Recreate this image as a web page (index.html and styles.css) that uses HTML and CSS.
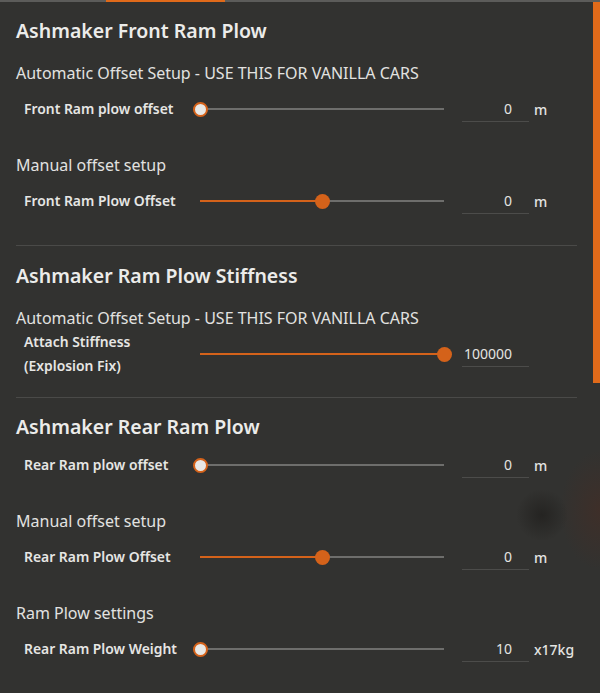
FILE: index.html
```html
<!DOCTYPE html>
<html lang="en">
<head>
    <meta charset="UTF-8">
    <title>Ram Plow settings</title>
    <link rel="stylesheet" href="styles.css">
</head>
<body>
    <div class="tabbar"><span class="tab-active"></span></div>
    <div class="scrollbar"></div>
    <div class="panel">
        <section class="section">
            <h2>Ashmaker Front Ram Plow</h2>
            <h3>Automatic Offset Setup - USE THIS FOR VANILLA CARS</h3>
            <div class="row">
                <span class="label">Front Ram plow offset</span>
                <div class="slider"><div class="fill" style="width: 0%"></div><span class="thumb empty" style="left: 0%"></span></div>
                <span class="value">0</span>
                <span class="unit">m</span>
            </div>
            <h3>Manual offset setup</h3>
            <div class="row">
                <span class="label">Front Ram Plow Offset</span>
                <div class="slider"><div class="fill" style="width: 50%"></div><span class="thumb" style="left: 50%"></span></div>
                <span class="value">0</span>
                <span class="unit">m</span>
            </div>
        </section>
        <section class="section compact">
            <h2>Ashmaker Ram Plow Stiffness</h2>
            <h3>Automatic Offset Setup - USE THIS FOR VANILLA CARS</h3>
            <div class="row tall">
                <span class="label">Attach Stiffness<br>(Explosion Fix)</span>
                <div class="slider"><div class="fill" style="width: 100%"></div><span class="thumb" style="left: 100%"></span></div>
                <span class="value left">100000</span>
                <span class="unit"></span>
            </div>
        </section>
        <section class="section last">
            <h2>Ashmaker Rear Ram Plow</h2>
            <div class="row first">
                <span class="label">Rear Ram plow offset</span>
                <div class="slider"><div class="fill" style="width: 0%"></div><span class="thumb empty" style="left: 0%"></span></div>
                <span class="value">0</span>
                <span class="unit">m</span>
            </div>
            <h3>Manual offset setup</h3>
            <div class="row">
                <span class="label">Rear Ram Plow Offset</span>
                <div class="slider"><div class="fill" style="width: 50%"></div><span class="thumb" style="left: 50%"></span></div>
                <span class="value">0</span>
                <span class="unit">m</span>
            </div>
            <h3>Ram Plow settings</h3>
            <div class="row">
                <span class="label">Rear Ram Plow Weight</span>
                <div class="slider"><div class="fill" style="width: 0%"></div><span class="thumb empty" style="left: 0%"></span></div>
                <span class="value">10</span>
                <span class="unit">x17kg</span>
            </div>
        </section>
    </div>
</body>
</html>
```

FILE: styles.css
```css
html, body {
    margin: 0;
    padding: 0;
}
body {
    width: 600px;
    height: 693px;
    overflow: hidden;
    position: relative;
    font-family: "Noto Sans", "Open Sans", sans-serif;
    color: #e4e4e2;
    background-color: #323230;
    background-image:
        radial-gradient(circle at 542px 515px, rgba(20, 18, 16, 0.45) 0, rgba(20, 18, 16, 0) 26px),
        radial-gradient(ellipse 40px 60px at 600px 510px, rgba(80, 42, 30, 0.4) 0, rgba(80, 42, 30, 0) 100%);
}
.tabbar {
    height: 2px;
    background: #5c5c5a;
    position: relative;
}
.tab-active {
    position: absolute;
    left: 106px;
    width: 119px;
    top: 0;
    height: 2px;
    background: #e06a1a;
}
.scrollbar {
    position: absolute;
    right: 0;
    top: 2px;
    width: 7px;
    height: 381px;
    background: #e06a1a;
}
.panel {
    padding: 16px 23px 0 16px;
}
.section {
    border-bottom: 1px solid #4a4a48;
    padding-bottom: 28px;
}
.section + .section {
    padding-top: 17px;
}
.section.compact {
    padding-bottom: 19px;
}
.section.last {
    border-bottom: none;
    padding-top: 16px;
}
h2 {
    margin: 0;
    font-size: 19.5px;
    font-weight: 600;
    line-height: 26px;
    color: #ececea;
}
h3 {
    margin: 19px 0 0;
    font-size: 16px;
    font-weight: 400;
    line-height: 20px;
    color: #e2e2e0;
}
.row + h3 {
    margin-top: 30px;
}
.row {
    display: grid;
    grid-template-columns: 176px 244px 85px auto;
    align-items: center;
    height: 32px;
    margin-top: 10px;
    padding-left: 8px;
}
.row.first {
    margin-top: 9px;
}
.row.tall {
    height: 48px;
    margin-top: 2px;
}
.label {
    font-size: 13.9px;
    font-weight: 600;
    line-height: 24px;
    color: #e6e6e4;
}
.slider {
    position: relative;
    height: 2px;
    background: #6e6e6c;
}
.fill {
    height: 2px;
    background: #d4621a;
}
.thumb {
    position: absolute;
    top: 50%;
    width: 15px;
    height: 15px;
    margin: -7.5px 0 0 -7.5px;
    border-radius: 50%;
    background: #d4621a;
    box-sizing: border-box;
}
.thumb.empty {
    background: #e8e8e6;
    border: 2px solid #d4621a;
}
.value {
    margin-left: 18px;
    height: 26px;
    box-sizing: border-box;
    border-bottom: 1px solid #4c4c4a;
    text-align: right;
    padding-right: 17px;
    font-size: 14px;
    line-height: 26px;
    color: #e4e4e2;
}
.value.left {
    text-align: left;
    padding-left: 2px;
    padding-right: 0;
}
.unit {
    margin-left: 5px;
    font-size: 14px;
    font-weight: 500;
    color: #e4e4e2;
}
```
